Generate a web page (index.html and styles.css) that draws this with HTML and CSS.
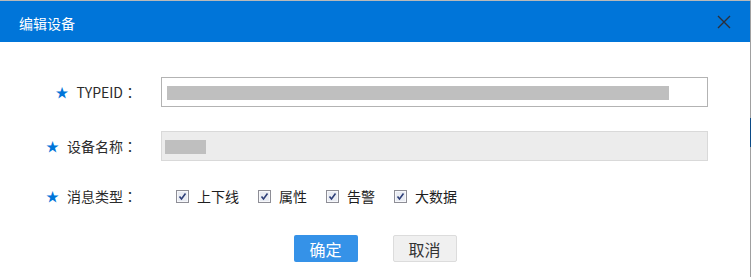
FILE: index.html
```html
<!DOCTYPE html>
<html lang="zh-CN">
<head>
<meta charset="utf-8">
<title>编辑设备</title>
<link rel="stylesheet" href="styles.css">
</head>
<body>
<div class="page">
  <div class="dialog">
    <div class="header">
      <span class="title">编辑设备</span>
      <span class="close" aria-label="关闭">
        <svg width="14" height="14" viewBox="0 0 14 14"><path d="M1 1 L13 13 M13 1 L1 13" stroke="#2b2f3a" stroke-width="1.4" fill="none"/></svg>
      </span>
    </div>
    <div class="form">
      <div class="row">
        <div class="label"><span class="star">★</span>TYPEID<span class="colon" lang="ja">：</span></div>
        <div class="input"><span class="mask mask-long"></span></div>
      </div>
      <div class="row">
        <div class="label"><span class="star">★</span>设备名称<span class="colon" lang="ja">：</span></div>
        <div class="input input-disabled"><span class="mask mask-short"></span></div>
      </div>
      <div class="row row-check">
        <div class="label"><span class="star">★</span>消息类型<span class="colon" lang="ja">：</span></div>
        <div class="checks">
          <label class="check"><svg class="cb" width="13" height="13" viewBox="0 0 13 13"><rect x="0.5" y="0.5" width="12" height="12" fill="#dfe3ec" stroke="#8e8e96"/><rect x="1.5" y="1.5" width="10" height="10" fill="#e9ecf3" stroke="#f7f8fb" stroke-width="1"/><path d="M3.5 6.5 L5.5 9 L9.5 3.5" stroke="#2e3f78" stroke-width="1.6" fill="none"/></svg><span>上下线</span></label>
          <label class="check"><svg class="cb" width="13" height="13" viewBox="0 0 13 13"><rect x="0.5" y="0.5" width="12" height="12" fill="#dfe3ec" stroke="#8e8e96"/><rect x="1.5" y="1.5" width="10" height="10" fill="#e9ecf3" stroke="#f7f8fb" stroke-width="1"/><path d="M3.5 6.5 L5.5 9 L9.5 3.5" stroke="#2e3f78" stroke-width="1.6" fill="none"/></svg><span>属性</span></label>
          <label class="check"><svg class="cb" width="13" height="13" viewBox="0 0 13 13"><rect x="0.5" y="0.5" width="12" height="12" fill="#dfe3ec" stroke="#8e8e96"/><rect x="1.5" y="1.5" width="10" height="10" fill="#e9ecf3" stroke="#f7f8fb" stroke-width="1"/><path d="M3.5 6.5 L5.5 9 L9.5 3.5" stroke="#2e3f78" stroke-width="1.6" fill="none"/></svg><span>告警</span></label>
          <label class="check"><svg class="cb" width="13" height="13" viewBox="0 0 13 13"><rect x="0.5" y="0.5" width="12" height="12" fill="#dfe3ec" stroke="#8e8e96"/><rect x="1.5" y="1.5" width="10" height="10" fill="#e9ecf3" stroke="#f7f8fb" stroke-width="1"/><path d="M3.5 6.5 L5.5 9 L9.5 3.5" stroke="#2e3f78" stroke-width="1.6" fill="none"/></svg><span>大数据</span></label>
        </div>
      </div>
      <div class="actions">
        <span class="btn btn-primary">确定</span>
        <span class="btn btn-default">取消</span>
      </div>
    </div>
  </div>
  <div class="edge"><div class="edge-mark"></div></div>
</div>
</body>
</html>
```
FILE: styles.css
```css
html, body {
  margin: 0;
  padding: 0;
  background: #ffffff;
}
body {
  font-family: "Noto Sans CJK SC", "Noto Sans", sans-serif;
  font-size: 14px;
  color: #333333;
}
.page {
  display: flex;
  width: 751px;
  height: 277px;
  padding-top: 1px;
  box-sizing: border-box;
  background: linear-gradient(#b9b9b9, #b9b9b9) top left / 100% 1px no-repeat, #ffffff;
}
.dialog {
  width: 750px;
  background: #ffffff;
  display: flex;
  flex-direction: column;
}
.header {
  height: 41px;
  background: #0075d9;
  display: flex;
  align-items: center;
  justify-content: space-between;
  padding: 0 19px 0 19px;
  box-sizing: border-box;
}
.title {
  color: #ffffff;
  font-size: 14px;
  line-height: 16px;
  margin-top: 2px;
}
.close {
  display: flex;
  width: 14px;
  height: 14px;
  margin-top: 1px;
}
.form {
  display: flex;
  flex-direction: column;
  padding-top: 35px;
}
.row {
  display: flex;
  align-items: center;
  height: 30px;
  margin-bottom: 24px;
}
.row-check {
  margin-bottom: 24px;
}
.row:nth-child(2) {
  margin-bottom: 20px;
}
.label {
  width: 137px;
  text-align: right;
  color: #2b2b2b;
  font-size: 14px;
  flex-shrink: 0;
}
.colon {
  font-family: "Noto Sans CJK JP", "Noto Sans CJK SC", sans-serif;
}
.star {
  color: #0075d9;
  font-size: 13px;
  margin-right: 8px;
  position: relative;
  top: -1px;
}
.input {
  margin-left: 24px;
  width: 547px;
  height: 30px;
  box-sizing: border-box;
  border: 1px solid #b3b3b3;
  background: #ffffff;
  display: flex;
  align-items: center;
  padding-left: 5px;
}
.input-disabled {
  border-color: #d9d9d9;
  background: #ececec;
  padding-left: 3px;
}
.mask {
  display: block;
  background: #bfbfbf;
  height: 14px;
}
.mask-long {
  width: 502px;
  margin-top: 1px;
}
.mask-short {
  width: 41px;
  margin-top: 2px;
}
.checks {
  margin-left: 39px;
  display: flex;
  align-items: center;
  gap: 19px;
}
.check {
  display: flex;
  align-items: center;
  gap: 8px;
  color: #1e1e1e;
}
.cb {
  display: block;
  flex-shrink: 0;
}
.actions {
  display: flex;
  justify-content: center;
  gap: 35px;
  padding-left: 0;
}
.btn {
  width: 64px;
  height: 27px;
  box-sizing: border-box;
  border-radius: 2px;
  display: flex;
  align-items: center;
  justify-content: center;
  font-size: 16px;
}
.btn-primary {
  background: #3592e8;
  color: #ffffff;
}
.btn-default {
  background: #f0f0f0;
  border: 1px solid #dcdcdc;
  color: #333333;
}
.edge {
  width: 1px;
  background: #a0a0a0;
  position: relative;
}
.edge-mark {
  position: absolute;
  left: 0;
  top: 117px;
  width: 1px;
  height: 29px;
  background: #0b4a86;
}
```
